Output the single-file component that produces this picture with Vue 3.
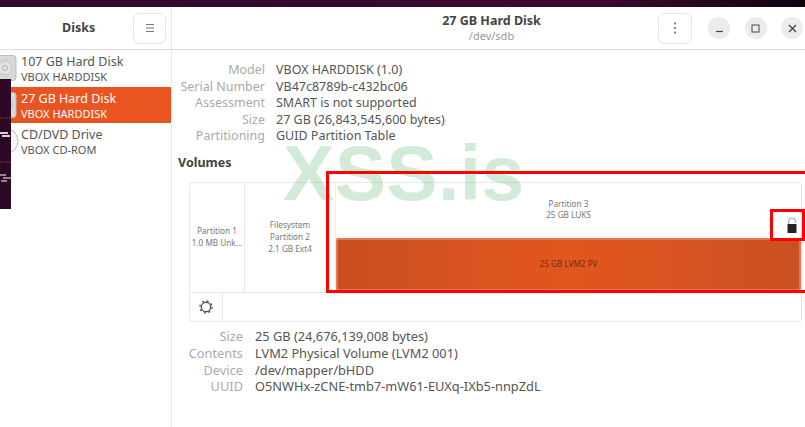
<script setup>
const diskRows = [
  { title: '107 GB Hard Disk', sub: 'VBOX HARDDISK', kind: 'hdd', selected: false },
  { title: '27 GB Hard Disk', sub: 'VBOX HARDDISK', kind: 'hdd', selected: true },
  { title: 'CD/DVD Drive', sub: 'VBOX CD-ROM', kind: 'cd', selected: false }
]
const diskInfo = [
  ['Model', 'VBOX HARDDISK (1.0)'],
  ['Serial Number', 'VB47c8789b-c432bc06'],
  ['Assessment', 'SMART is not supported'],
  ['Size', '27 GB (26,843,545,600 bytes)'],
  ['Partitioning', 'GUID Partition Table']
]
const volInfo = [
  ['Size', '25 GB (24,676,139,008 bytes)'],
  ['Contents', 'LVM2 Physical Volume (LVM2 001)'],
  ['Device', '/dev/mapper/bHDD'],
  ['UUID', 'O5NWHx-zCNE-tmb7-mW61-EUXq-IXb5-nnpZdL']
]
</script>

<template>
  <div class="screen">
    <div class="topbar"></div>
    <div class="window">
      <aside class="side">
        <header class="side-head">
          <span class="side-title">Disks</span>
          <button class="btn menu-btn">
            <svg width="10" height="10" viewBox="0 0 10 10"><path d="M1 1.5h8M1 5h8M1 8.5h8" stroke="#777" stroke-width="1" fill="none"/></svg>
          </button>
        </header>
        <ul class="disk-list">
          <li v-for="d in diskRows" :key="d.title" class="disk" :class="{ selected: d.selected }">
            <svg v-if="d.kind === 'hdd'" class="disk-icon" width="21" height="28" viewBox="0 0 21 28">
              <rect x="-10" y="1.5" width="26" height="25" rx="3" fill="#d9d9d9" stroke="#bcbcbc"/>
              <circle cx="5" cy="14" r="7" fill="#e2e2e2" stroke="#c4c4c4"/>
              <circle cx="5" cy="14" r="2.5" fill="none" stroke="#b0b0b0"/>
            </svg>
            <svg v-else class="disk-icon" width="21" height="28" viewBox="0 0 21 28">
              <circle cx="5" cy="14" r="13" fill="#f6f6f6" stroke="#bbb"/>
            </svg>
            <div class="disk-text">
              <div class="disk-title">{{ d.title }}</div>
              <div class="disk-sub">{{ d.sub }}</div>
            </div>
          </li>
        </ul>
      </aside>

      <main class="main">
        <header class="main-head">
          <div class="head-title">
            <div class="head-name">27 GB Hard Disk</div>
            <div class="head-path">/dev/sdb</div>
          </div>
          <div class="head-actions">
            <button class="btn dots-btn">
              <svg width="4" height="12" viewBox="0 0 4 12"><circle cx="2" cy="1.5" r="1" fill="#666"/><circle cx="2" cy="6" r="1" fill="#666"/><circle cx="2" cy="10.5" r="1" fill="#666"/></svg>
            </button>
            <span class="win-btn"><svg width="9" height="9" viewBox="0 0 9 9"><path d="M1 7.5h7" stroke="#444" stroke-width="1.2"/></svg></span>
            <span class="win-btn"><svg width="9" height="9" viewBox="0 0 9 9"><rect x="1" y="1" width="7" height="7" fill="none" stroke="#444" stroke-width="1"/></svg></span>
            <span class="win-btn"><svg width="9" height="9" viewBox="0 0 9 9"><path d="M1 1l7 7M8 1l-7 7" stroke="#444" stroke-width="1.3"/></svg></span>
          </div>
        </header>

        <section class="content">
          <dl class="info disk-info">
            <template v-for="r in diskInfo" :key="r[0]">
              <dt>{{ r[0] }}</dt><dd>{{ r[1] }}</dd>
            </template>
          </dl>
          <h2 class="vol-title">Volumes</h2>

          <div class="vol-box">
            <div class="vol-row">
              <div class="part p1">Partition 1<br>1.0 MB Unk...</div>
              <div class="part p2">Filesystem<br>Partition 2<br>2.1 GB Ext4</div>
              <div class="part p3">
                <div class="p3-label">Partition 3<br>25 GB LUKS</div>
                <svg class="lock" width="10" height="15" viewBox="0 0 10 15">
                  <path d="M1.6 6V3.6a3.4 3.4 0 0 1 6.8 0V4.6" fill="none" stroke="#aaa" stroke-width="1.2"/>
                  <rect x="0.5" y="6" width="9" height="9" rx="0.5" fill="#2c1f2d"/>
                </svg>
                <div class="lvm">25 GB LVM2 PV</div>
              </div>
            </div>
            <div class="vol-tools">
              <span class="gear-cell">
                <svg width="14" height="14" viewBox="0 0 16 16">
                  <circle cx="8" cy="8" r="5.4" fill="none" stroke="#555" stroke-width="1.5"/>
                  <circle cx="8" cy="8" r="6.9" fill="none" stroke="#555" stroke-width="1.6" stroke-dasharray="2.2 3.22"/>
                </svg>
              </span>
            </div>
          </div>

          <dl class="info vol-info">
            <template v-for="r in volInfo" :key="r[0]">
              <dt>{{ r[0] }}</dt><dd>{{ r[1] }}</dd>
            </template>
          </dl>
        </section>
      </main>
    </div>

    <svg class="behind-window" width="11" height="130" viewBox="0 0 11 130">
      <rect width="11" height="130" fill="#2c0a26"/>
      <path d="M0 39h11M0 83h11" stroke="#a8352f" stroke-width="1" stroke-dasharray="1.5 1.5"/>
      <path d="M0 54h8M2 57h8" stroke="#d8d3d6" stroke-width="2"/>
      <path d="M0 96h6M3 99h8M1 102h6" stroke="#b9b2b6" stroke-width="1.6"/>
    </svg>
    <div class="watermark">XSS.is</div>
    <div class="mark mark-big"></div>
    <div class="mark mark-small"></div>
  </div>
</template>

<style>
html, body { margin: 0; padding: 0; background: #fff; overflow: hidden; }
</style>

<style scoped>
.screen {
  position: relative;
  width: 805px;
  height: 427px;
  overflow: hidden;
  background: #fff;
  font-family: "Noto Sans", "Open Sans", sans-serif;
  color: #4a4a4a;
  display: flex;
  flex-direction: column;
}
.topbar {
  height: 7px;
  flex: none;
  background: linear-gradient(90deg, #33092b 0%, #3a0a2e 75%, #0f030c 100%);
}
.window { flex: 1; display: flex; min-height: 0; }
.side { width: 171px; flex: none; border-right: 1px solid #e6e6e6; }
.side-head {
  height: 42px;
  border-bottom: 1px solid #dedede;
  display: flex;
  align-items: center;
  justify-content: flex-end;
  padding-right: 5px;
  position: relative;
}
.side-title {
  position: absolute;
  left: 62px;
  top: 12px;
  font-size: 12.5px;
  font-weight: 700;
  color: #444;
}
.btn {
  width: 33px;
  height: 31px;
  padding: 0;
  background: #fff;
  border: 1px solid #e6e6e6;
  border-radius: 6px;
  display: flex;
  align-items: center;
  justify-content: center;
}
.disk-list { list-style: none; margin: 0; padding: 0; }
.disk {
  height: 36.5px;
  display: flex;
  align-items: center;
  overflow: hidden;
}
.disk-icon { flex: none; display: block; }
.disk-text { line-height: 15px; padding-top: 2px; }
.disk-title { font-size: 12.5px; color: #555; white-space: nowrap; }
.disk-sub { font-size: 11px; color: #555; white-space: nowrap; }
.disk.selected { background: #e95420; }
.disk.selected .disk-title, .disk.selected .disk-sub { color: #fff; }

.main { flex: 1; min-width: 0; display: flex; flex-direction: column; }
.main-head {
  height: 42px;
  flex: none;
  border-bottom: 1px solid #dedede;
  display: flex;
  align-items: center;
  position: relative;
}
.head-title {
  position: absolute;
  left: 0;
  right: 0;
  top: 6px;
  text-align: center;
  transform: translateX(3px);
}
.head-name { font-size: 12.5px; font-weight: 700; line-height: 16px; color: #444; }
.head-path { font-size: 11px; line-height: 14px; color: #999; }
.head-actions {
  margin-left: auto;
  display: flex;
  align-items: center;
  gap: 14.5px;
  padding-right: 2px;
  position: relative;
}
.dots-btn { width: 34px; margin-right: 1.5px; }
.win-btn {
  width: 22px;
  height: 22px;
  border-radius: 50%;
  background: #ececec;
  display: flex;
  align-items: center;
  justify-content: center;
}
.content { flex: 1; padding: 0 3px 0 6px; min-height: 0; }
.info {
  display: grid;
  margin: 0;
  font-size: 12.5px;
  line-height: 16.6px;
}
.info dt { text-align: right; color: #aaa; }
.info dd { margin: 0; color: #555; white-space: nowrap; }
.disk-info {
  grid-template-columns: 87px 1fr;
  column-gap: 11px;
  margin-top: 12px;
}
.vol-title {
  margin: 9px 0 0;
  font-size: 12.5px;
  line-height: 17px;
  font-weight: 700;
  color: #444;
}
.vol-box {
  margin: 11px 0 0 11px;
  height: 140px;
  border: 1px solid #e8e8e8;
  border-radius: 4px;
  display: flex;
  flex-direction: column;
  box-sizing: border-box;
}
.vol-row { height: 110px; flex: none; display: flex; border-bottom: 1px solid #e8e8e8; box-sizing: border-box; }
.part {
  font-size: 8.2px;
  line-height: 12px;
  color: #777;
  text-align: center;
  white-space: nowrap;
  box-sizing: border-box;
}
.p1 { width: 55px; border-right: 1px solid #e8e8e8; display: flex; align-items: center; justify-content: center; }
.p2 { width: 90px; display: flex; align-items: center; justify-content: center; }
.p3 {
  flex: 1;
  border-left: 1px solid #eee;
  position: relative;
  display: flex;
  flex-direction: column;
}
.p3-label { padding-top: 15px; line-height: 11.5px; }
.lock { position: absolute; right: 4px; top: 35px; }
.lvm {
  margin-top: auto;
  margin-bottom: 1px;
  height: 53px;
  box-sizing: border-box;
  border: 2px solid #e0795a;
  border-radius: 2px;
  background: linear-gradient(90deg, #c94f20 0%, #e2561f 50%, #ca5022 100%);
  color: #7a2c10;
  font-size: 8.2px;
  display: flex;
  align-items: center;
  justify-content: center;
}
.vol-tools { flex: 1; display: flex; }
.gear-cell {
  width: 32px;
  border-right: 1px solid #e8e8e8;
  display: flex;
  align-items: center;
  justify-content: center;
}
.vol-info {
  grid-template-columns: 65px 1fr;
  column-gap: 12px;
  margin-top: 6.5px;
  font-size: 12.8px;
}
.behind-window {
  position: absolute;
  left: 0;
  top: 79px;
  display: block;
}
.watermark {
  position: absolute;
  left: 283px;
  top: 128px;
  font-family: "Liberation Sans", Arial, sans-serif;
  font-size: 77px;
  line-height: 90px;
  font-weight: 700;
  letter-spacing: 0.3px;
  color: rgba(60, 170, 90, 0.23);
  pointer-events: none;
}
.mark { position: absolute; border: 3px solid #f00; box-sizing: border-box; pointer-events: none; }
.mark-big { left: 326px; top: 171px; width: 490px; height: 122px; }
.mark-small { left: 770px; top: 209px; width: 35px; height: 32px; }
</style>
